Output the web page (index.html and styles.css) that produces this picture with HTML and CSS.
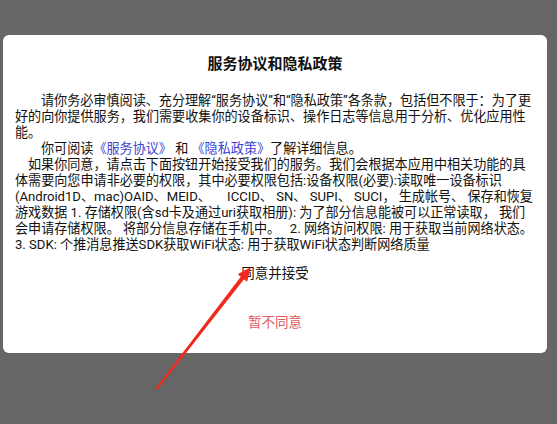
FILE: index.html
```html
<!DOCTYPE html>
<html lang="zh-CN">
<head>
<meta charset="utf-8">
<link rel="stylesheet" href="styles.css">
</head>
<body>
<div class="overlay">
  <div class="dialog">
    <h1 class="title">服务协议和隐私政策</h1>
    <div class="content">
      <p class="indent2">请你务必审慎阅读、充分理解“服务协议”和“隐私政策”各条款，包括但不限于：为了更<br>好的向你提供服务，我们需要收集你的设备标识、操作日志等信息用于分析、优化应用性能。</p>
      <p class="indent2">你可阅读<span class="link">《服务协议》</span> 和 <span class="link">《隐私政策》</span>了解详细信息。</p>
      <p class="indent1">如果你同意，请点击下面按钮开始接受我们的服务。我们会根据本应用中相关功能的具体需要向您申请非必要的权限，其中必要权限包括:设备权限(必要):读取唯一设备标识(Android1D、mac)OAID、MEID、&nbsp;&nbsp;&nbsp;&nbsp; ICCID、 SN、 SUPI、 SUCI， 生成帐号、 保存和恢复游戏数据 1. 存储权限(含sd卡及通过uri获取相册): 为了部分信息能被可以正常读取， 我们会申请存储权限。 将部分信息存储在手机中。&nbsp;&nbsp; 2. 网络访问权限: 用于获取当前网络状态。 3. SDK: 个推消息推送SDK获取WiFi状态: 用于获取WiFi状态判断网络质量</p>
    </div>
    <div class="actions">
      <div class="btn btn-accept">同意并接受</div>
      <div class="btn btn-decline">暂不同意</div>
    </div>
  </div>
  <svg class="arrow" width="557" height="424" viewBox="0 0 557 424">
    <polygon points="155,389 240.8,276.8 237.7,274.3 251,267 247.1,281.7 244,279.2 157,390" fill="#f02a1e"/>
  </svg>
</div>
</body>
</html>
```

FILE: styles.css
```css
html, body {
  margin: 0;
  padding: 0;
}
body {
  background: #666666;
  width: 557px;
  height: 424px;
  overflow: hidden;
  font-family: Roboto, "Noto Sans CJK SC", sans-serif;
}
.overlay {
  position: relative;
  width: 557px;
  height: 424px;
  padding: 35px 10px 0 3px;
  box-sizing: border-box;
}
.dialog {
  background: #ffffff;
  border-radius: 6px;
  height: 318px;
  box-sizing: border-box;
  padding: 19px 12px 11px 12px;
  display: flex;
  flex-direction: column;
}
.title {
  margin: 0;
  font-size: 15px;
  line-height: 20px;
  font-weight: bold;
  text-align: center;
  color: #111;
}
.content {
  margin-top: 19px;
  font-size: 13.1px;
  line-height: 16px;
  color: #111;
}
.content p {
  margin: 0;
}
.indent2 {
  text-indent: 26px;
}
.indent1 {
  text-indent: 13px;
}
.link {
  color: #3a45d2;
}
.actions {
  display: flex;
  flex-direction: column;
  align-items: center;
  gap: 9px;
}
.btn {
  height: 40px;
  line-height: 40px;
  font-size: 13.5px;
  text-align: center;
}
.btn-accept {
  color: #111;
}
.btn-decline {
  color: #e05a5e;
}
.arrow {
  position: absolute;
  left: 0;
  top: 0;
  pointer-events: none;
}
```
